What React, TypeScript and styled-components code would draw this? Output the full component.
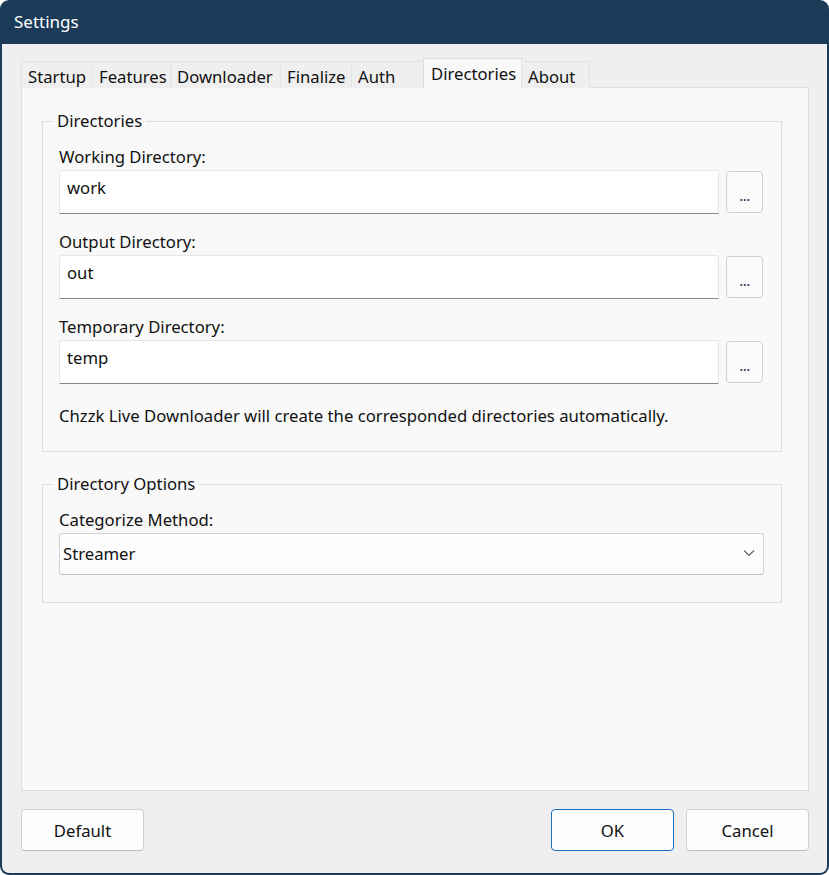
import React from 'react'
import styled, { createGlobalStyle } from 'styled-components'

const GlobalStyle = createGlobalStyle`
    html, body {
        margin: 0;
        padding: 0;
        background: #ffffff;
    }
    body {
        font-family: "Noto Sans", "Open Sans", sans-serif;
        font-size: 16.7px;
        color: #1a1a1a;
    }
`

const tabs = [
    { label: 'Startup', w: 72 },
    { label: 'Features', w: 79 },
    { label: 'Downloader', w: 111 },
    { label: 'Finalize', w: 72 },
    { label: 'Auth', w: 73 },
    { label: 'Directories', w: 99, active: true },
    { label: 'About', w: 69 },
]

const dirs = [
    { label: 'Working Directory:', value: 'work' },
    { label: 'Output Directory:', value: 'out' },
    { label: 'Temporary Directory:', value: 'temp' },
]

export default function App() {
    return (
        <>
            <GlobalStyle />
            <Window>
                <TitleBar>Settings</TitleBar>
                <Body>
                    <TabStrip>
                        {tabs.map((t) => (
                            <Tab key={t.label} $w={t.w} $active={!!t.active}>{t.label}</Tab>
                        ))}
                    </TabStrip>
                    <Panel>
                        <Group>
                            <Legend>Directories</Legend>
                            {dirs.map((d) => (
                                <Field key={d.label}>
                                    <FieldLabel>{d.label}</FieldLabel>
                                    <InputRow>
                                        <TextBox>{d.value}</TextBox>
                                        <BrowseButton>...</BrowseButton>
                                    </InputRow>
                                </Field>
                            ))}
                            <Note>Chzzk Live Downloader will create the corresponded directories automatically.</Note>
                        </Group>
                        <Group $gap={21} $bottom={27} $right={17}>
                            <Legend>Directory Options</Legend>
                            <Field>
                                <FieldLabel>Categorize Method:</FieldLabel>
                                <Combo>
                                    <span>Streamer</span>
                                    <svg width="12" height="8" viewBox="0 0 12 8">
                                        <path d="M1 1.5 L6 6.5 L11 1.5" fill="none" stroke="#5f5f5f" strokeWidth="1.1" />
                                    </svg>
                                </Combo>
                            </Field>
                        </Group>
                    </Panel>
                    <Footer>
                        <DialogButton>Default</DialogButton>
                        <Spacer />
                        <DialogButton $primary>OK</DialogButton>
                        <DialogButton>Cancel</DialogButton>
                    </Footer>
                </Body>
            </Window>
        </>
    )
}

const Window = styled.div`
    width: 829px;
    height: 875px;
    box-sizing: border-box;
    background: #1b3b59;
    border-radius: 9px;
    padding: 0 2px 2px 2px;
    display: flex;
    flex-direction: column;
    overflow: hidden;
`

const TitleBar = styled.div`
    height: 44px;
    flex: none;
    display: flex;
    align-items: center;
    padding-left: 12px;
    color: #ffffff;
    font-size: 17px;
    padding-bottom: 1px;
    box-sizing: border-box;
`

const Body = styled.div`
    flex: 1;
    background: #efefef;
    border-radius: 0 0 7px 7px;
    padding: 14px 18px 22px 19px;
    display: flex;
    flex-direction: column;
    min-height: 0;
`

const TabStrip = styled.div`
    display: flex;
    align-items: flex-end;
    height: 30px;
    padding-left: 1px;
    position: relative;
    z-index: 1;
    margin-bottom: -1px;
`

const Tab = styled.div<{ $w: number; $active: boolean }>`
    width: ${(p) => p.$w}px;
    box-sizing: border-box;
    height: ${(p) => (p.$active ? 30 : 27)}px;
    padding: ${(p) => (p.$active ? '5px 0 0 7px' : '5px 0 0 6px')};
    background: ${(p) => (p.$active ? '#f9f9f9' : '#efefef')};
    border: 1px solid ${(p) => (p.$active ? '#dcdcdc' : '#e3e3e3')};
    border-bottom: none;
    margin-left: -1px;
    white-space: nowrap;
    color: #111;
    line-height: 20px;
`

const Panel = styled.div`
    flex: 1;
    background: #f9f9f9;
    border: 1px solid #dddddd;
    padding: 22px 26px 0 20px;
`

const Group = styled.fieldset<{ $gap?: number; $bottom?: number; $right?: number }>`
    margin: ${(p) => p.$gap || 0}px 0 0 0;
    border: 1px solid #dcdcdc;
    padding: 2px ${(p) => p.$right ?? 18}px ${(p) => p.$bottom ?? 24}px 16px;
`

const Legend = styled.legend`
    padding: 0 4px;
    margin-left: -6px;
    line-height: 22px;
    color: #111;
`

const Field = styled.div`
    display: flex;
    flex-direction: column;
    gap: 2px;
    margin-top: 17px;
    &:first-of-type {
        margin-top: 12px;
    }
`

const FieldLabel = styled.div`
    line-height: 22px;
    color: #111;
`

const InputRow = styled.div`
    display: flex;
    gap: 7px;
`

const TextBox = styled.div`
    flex: 1;
    height: 44px;
    box-sizing: border-box;
    background: #ffffff;
    border: 1px solid #e6e6e6;
    border-bottom: 1px solid #8a8a8a;
    border-radius: 3px 3px 0 0;
    padding: 6px 7px;
    line-height: 22px;
    color: #111;
`

const BrowseButton = styled.div`
    width: 37px;
    height: 42px;
    margin-top: 1px;
    box-sizing: border-box;
    background: #fbfbfb;
    border: 1px solid #d0d0d0;
    border-radius: 4px;
    display: flex;
    align-items: center;
    justify-content: center;
    padding-top: 5px;
    font-size: 15px;
    letter-spacing: -0.5px;
    color: #1b2b4a;
`

const Note = styled.div`
    margin-top: 21px;
    line-height: 22px;
    color: #111;
`

const Combo = styled.div`
    height: 42px;
    box-sizing: border-box;
    background: #fdfdfd;
    border: 1px solid #d4d4d4;
    border-bottom-color: #c2c2c2;
    border-radius: 3px;
    display: flex;
    align-items: center;
    justify-content: space-between;
    padding: 0 8px 2px 3px;
    color: #111;
`

const Footer = styled.div`
    display: flex;
    gap: 12px;
    margin-top: 18px;
`

const Spacer = styled.div`
    flex: 1;
`

const DialogButton = styled.div<{ $primary?: boolean }>`
    width: 123px;
    height: 42px;
    box-sizing: border-box;
    background: #fdfdfd;
    border: 1px solid ${(p) => (p.$primary ? '#1a6fc4' : '#d0d0d0')};
    border-bottom-color: ${(p) => (p.$primary ? '#1a6fc4' : '#bdbdbd')};
    border-radius: 4px;
    display: flex;
    align-items: center;
    justify-content: center;
    color: #111;
`
